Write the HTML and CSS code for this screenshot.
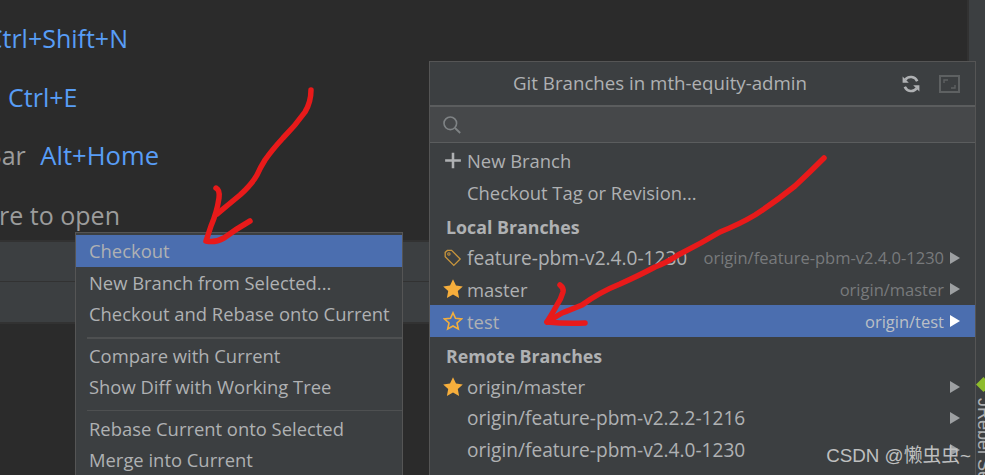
FILE: index.html
```html
<!DOCTYPE html>
<html lang="en">
<head>
<meta charset="utf-8">
<title>Git Branches</title>
<link rel="stylesheet" href="styles.css">
</head>
<body>
<main class="ide">
  <section class="welcome">
    <p class="hint hint-a"><span class="key">Ctrl+Shift+N</span></p>
    <p class="hint hint-b"><span class="key">Ctrl+E</span></p>
    <p class="hint hint-c">Bar <span class="key key-gap">Alt+Home</span></p>
    <p class="hint hint-d">re to open</p>
  </section>
  <div class="band"></div>
  <aside class="sidebar">
    <span class="rebel-icon"></span>
    <span class="rebel-text">JRebel Setup</span>
  </aside>

  <nav class="menu">
    <div class="menu-item selected">Checkout</div>
    <div class="menu-item">New Branch from Selected...</div>
    <div class="menu-item">Checkout and Rebase onto Current</div>
    <div class="menu-sep thick"></div>
    <div class="menu-item">Compare with Current</div>
    <div class="menu-item">Show Diff with Working Tree</div>
    <div class="menu-sep"></div>
    <div class="menu-item">Rebase Current onto Selected</div>
    <div class="menu-item">Merge into Current</div>
  </nav>

  <section class="popup">
    <header class="popup-head">
      <span class="popup-title">Git Branches in mth-equity-admin</span>
      <svg class="ico-refresh" viewBox="0 0 20 20" width="20" height="20"><path d="M16.2 7.2A7 7 0 0 0 4.3 5.6" fill="none" stroke="#afb1b3" stroke-width="2.6"/><path d="M3.8 12.8a7 7 0 0 0 11.9 1.6" fill="none" stroke="#afb1b3" stroke-width="2.6"/><path d="M1.6 2.6v6.2h6.2zM18.4 17.4v-6.2h-6.2z" fill="#afb1b3"/></svg>
      <svg class="ico-expand" viewBox="0 0 21 18" width="21" height="18"><rect x="1" y="1" width="19" height="16" fill="none" stroke="#5e6162" stroke-width="2"/><path d="M5 8V5h4M16 10v3h-4" fill="none" stroke="#5e6162" stroke-width="1.4"/></svg>
    </header>
    <div class="search">
      <svg viewBox="0 0 20 20" width="20" height="20"><circle cx="8.3" cy="8.3" r="6.3" fill="none" stroke="#7f8385" stroke-width="1.6"/><path d="M13 13l5.2 5" stroke="#7f8385" stroke-width="1.8"/></svg>
    </div>
    <div class="rows">
      <div class="row first"><svg class="lead" viewBox="0 0 16 16" width="17" height="17"><path d="M8 .6v14.8M.6 8h14.8" stroke="#afb1b3" stroke-width="2.4"/></svg><span class="name">New Branch</span></div>
      <div class="row"><span class="lead-gap"></span><span class="name">Checkout Tag or Revision...</span></div>
      <div class="group">Local Branches</div>
      <div class="row"><svg class="lead" viewBox="0 0 18 18" width="18" height="18"><path d="M1.2 3.4v4.4l8.6 8.6 6.4-6.4-8.6-8.6H3.4z" fill="none" stroke="#c9963d" stroke-width="1.3"/><circle cx="4.9" cy="5" r="1.2" fill="none" stroke="#c9963d" stroke-width="1.1"/></svg><span class="name long">feature-pbm-v2.4.0-1230</span><span class="remote">origin/feature-pbm-v2.4.0-1230</span><span class="tri"></span></div>
      <div class="row"><svg class="lead" viewBox="0 0 20 20" width="20" height="20"><use href="#star-solid"/></svg><span class="name">master</span><span class="remote">origin/master</span><span class="tri"></span></div>
      <div class="row selected"><svg class="lead" viewBox="0 0 20 20" width="20" height="20"><path d="M10 1.8l2.5 5.5 6 .7-4.5 4 1.3 6L10 15l-5.3 3 1.3-6-4.5-4 6-.7z" fill="none" stroke="#f2ae3d" stroke-width="1.6"/></svg><span class="name">test</span><span class="remote">origin/test</span><span class="tri"></span></div>
      <div class="group">Remote Branches</div>
      <div class="row"><svg class="lead" viewBox="0 0 20 20" width="20" height="20"><use href="#star-solid"/></svg><span class="name mid">origin/master</span><span class="remote"></span><span class="tri"></span></div>
      <div class="row"><span class="lead-gap"></span><span class="name long">origin/feature-pbm-v2.2.2-1216</span><span class="remote"></span><span class="tri"></span></div>
      <div class="row"><span class="lead-gap"></span><span class="name long">origin/feature-pbm-v2.4.0-1230</span><span class="remote"></span><span class="tri"></span></div>
    </div>
  </section>

  <svg class="defs" width="0" height="0"><defs><path id="star-solid" d="M10 .2l3 6.3 6.8.9-5 4.7 1.3 6.8-6.1-3.3-6.1 3.3 1.3-6.8-5-4.7 6.8-.9z" fill="#f6ae3c"/></defs></svg>

  <svg class="scribble" viewBox="0 0 985 475" width="985" height="475">
    <g fill="none" stroke="#e81a1a" stroke-width="5.5" stroke-linecap="round" stroke-linejoin="round">
      <path d="M311 90Q311 102 305 112Q295 126 283 138Q272 150 265 160Q260 168 257 175Q252 184 240 195Q228 205 217 214"/>
      <path d="M216 188Q220 190 219 198Q217 212 211 226L206 241Q215 243 224 238Q236 229 250 221"/>
      <path d="M824 158Q810 172 795 186Q775 202 755 215Q740 224 720 232Q700 244 678 255Q668 262 655 267Q640 275 620 284Q600 292 582 305Q570 310 562 313L547 322"/>
      <path d="M560 285Q564 288 563 292Q561 299 557 305Q552 314 547 322Q566 324 585 323"/>
    </g>
  </svg>

  <div class="watermark">CSDN @懒虫虫~</div>
</main>
</body>
</html>
```
FILE: styles.css
```css
* { box-sizing: border-box; }
html, body { margin: 0; padding: 0; }
body { width: 985px; height: 475px; overflow: hidden; background: #2b2b2b; font-family: "Open Sans", "Noto Sans", sans-serif; font-size: 18.4px; color: #afb1b3; }
.ide { position: relative; width: 985px; height: 475px; overflow: hidden; }

.welcome { position: absolute; inset: 0; }
.hint { position: absolute; margin: 0; font-size: 25px; line-height: 32px; color: #9c9c9c; white-space: nowrap; }
.key { color: #589df6; }
.key-gap { margin-left: 8px; font-size: 25.6px; }
.hint-a { right: 857px; top: 22px; }
.hint-b { left: 8px; top: 81px; }
.hint-c { right: 826px; top: 139px; }
.hint-d { right: 865px; top: 199px; }

.band { position: absolute; left: 0; right: 0; top: 240px; height: 84px; background: #3c3f41; border-top: 2px solid #323232; border-bottom: 2px solid #323232; }
.band::after { content: ""; display: block; height: 1px; margin-top: 39px; background: #323232; }

.sidebar { position: absolute; right: 0; top: 0; bottom: 0; width: 18px; background: #3c3f41; border-left: 2px solid #323232; overflow: hidden; padding: 377px 0 0 7px; }
.rebel-icon { display: block; width: 15px; height: 15px; background: #8ebc2c; clip-path: polygon(50% 0, 100% 50%, 50% 100%, 0 50%); }
.rebel-text { display: block; writing-mode: vertical-rl; font-family: "Liberation Sans", sans-serif; font-size: 18px; line-height: 16px; color: #afb1b3; margin-top: 6px; white-space: nowrap; }

.menu { position: absolute; left: 75px; top: 232px; width: 328px; height: 260px; background: #3c3f41; border: 1px solid #555; padding-top: 2px; }
.menu-item { height: 31.5px; line-height: 31.5px; padding-left: 13px; white-space: nowrap; }
.menu-item.selected { background: #4b6eaf; }
.menu-sep { height: 1px; margin: 7px 0 2px 11px; background: #4e5051; }
.menu-sep.thick { height: 2px; margin-top: 7px; margin-bottom: 1px; }

.popup { position: absolute; left: 429px; top: 61px; width: 547px; height: 430px; background: #3c3f41; border: 1px solid #555; }
.popup-head { position: relative; height: 43px; display: flex; align-items: center; justify-content: center; padding: 0 85px 2px 0; }
.popup-title { font-size: 18.7px; white-space: nowrap; }
.ico-refresh { position: absolute; left: 471px; top: 12px; }
.ico-expand { position: absolute; left: 509px; top: 13px; }
.search { height: 38px; background: #46484a; border-top: 2px solid #5b5d5e; border-bottom: 1px solid #5b5d5e; padding: 8px 0 0 12px; }
.search svg { display: block; }
.row { height: 31.5px; display: flex; align-items: center; padding: 0 15px 0 0; white-space: nowrap; }
.row.first { margin-top: 2px; }
.row.selected { height: 32px; background: #4b6eaf; }
.lead { flex: none; margin-left: 13px; width: 20px; margin-right: 4px; }
.lead-gap { flex: none; width: 37px; }
.name { flex: none; }
.name.long { font-size: 19.1px; }
.name.mid { font-size: 18.7px; }
.remote { margin-left: auto; color: #787a7c; font-size: 16.5px; }
.row.selected .remote { color: #bbc0c6; }
.tri { flex: none; width: 0; height: 0; margin-left: 6px; border-left: 10px solid #9da0a2; border-top: 6.5px solid transparent; border-bottom: 6.5px solid transparent; }
.row.selected .tri { border-left-color: #fff; }
.group { height: 34px; line-height: 39px; padding-left: 16px; font-weight: 700; font-size: 17.8px; color: #afb1b3; }

.defs { position: absolute; }
.scribble { position: absolute; left: 0; top: 0; pointer-events: none; }
.watermark { position: absolute; right: 14px; top: 440px; font-family: "Liberation Sans", "Noto Sans CJK SC", sans-serif; font-size: 18.8px; color: #bfc0c0; white-space: nowrap; }
```
